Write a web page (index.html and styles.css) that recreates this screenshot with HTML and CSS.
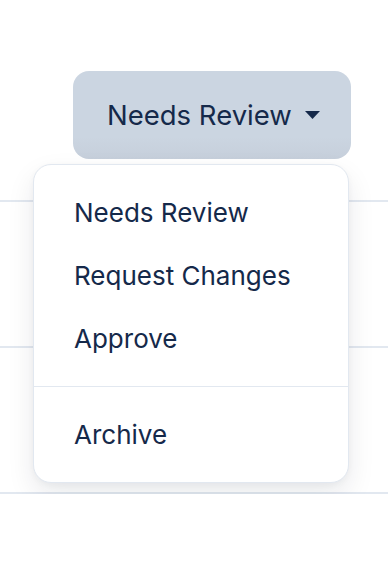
FILE: index.html
```html
<!DOCTYPE html>
<html lang="en">
<head>
<meta charset="utf-8">
<link rel="stylesheet" href="styles.css">
</head>
<body>
<div class="table">
  <div class="row row-first">
    <div class="dropdown">
      <button class="trigger" type="button">
        <span>Needs Review</span>
        <svg class="caret" width="15" height="8" viewBox="0 0 15 8"><path d="M0 0H15L7.5 8Z" fill="currentColor"/></svg>
      </button>
      <div class="menu">
        <div class="section">
          <div class="item">Needs Review</div>
          <div class="item">Request Changes</div>
          <div class="item">Approve</div>
        </div>
        <div class="section section-divided">
          <div class="item">Archive</div>
        </div>
      </div>
    </div>
  </div>
  <div class="row"></div>
  <div class="row"></div>
</div>
</body>
</html>
```
FILE: styles.css
```css
html, body {
  margin: 0;
  padding: 0;
  background: #ffffff;
  font-family: Inter, "Noto Sans", sans-serif;
  color: #15294a;
}

.table {
  display: flex;
  flex-direction: column;
}

.row {
  height: 144px;
  border-bottom: 2px solid #e2e8f0;
}

.row-first {
  height: 202px;
  box-sizing: border-box;
  padding: 71px 37px 0 0;
  display: flex;
  justify-content: flex-end;
  align-items: flex-start;
}

.dropdown {
  position: relative;
}

.trigger {
  display: flex;
  align-items: center;
  gap: 13px;
  width: 278px;
  height: 88px;
  box-sizing: border-box;
  padding: 0 33px 0 34px;
  border: none;
  border-radius: 16px;
  background: linear-gradient(#cbd5e1 0%, #cbd5e1 75%, #c6cfdb 100%);
  font-family: Inter, "Noto Sans", sans-serif;
  font-size: 27.5px;
  color: #15294a;
  white-space: nowrap;
}

.caret {
  flex: none;
  color: #15294a;
}

.menu {
  position: absolute;
  top: calc(100% + 5px);
  right: 2px;
  width: 316px;
  box-sizing: border-box;
  background: #ffffff;
  border: 1px solid #e2e8f0;
  border-radius: 18px;
  box-shadow: 0 12px 28px rgba(15, 23, 42, 0.09), 0 2px 6px rgba(15, 23, 42, 0.04);
  overflow: hidden;
}

.section {
  padding: 16px 0;
}

.section-divided {
  border-top: 1px solid #e2e8f0;
}

.item {
  padding: 12px 40px;
  font-size: 26px;
  line-height: 39px;
  color: #15294a;
  white-space: nowrap;
}
```
